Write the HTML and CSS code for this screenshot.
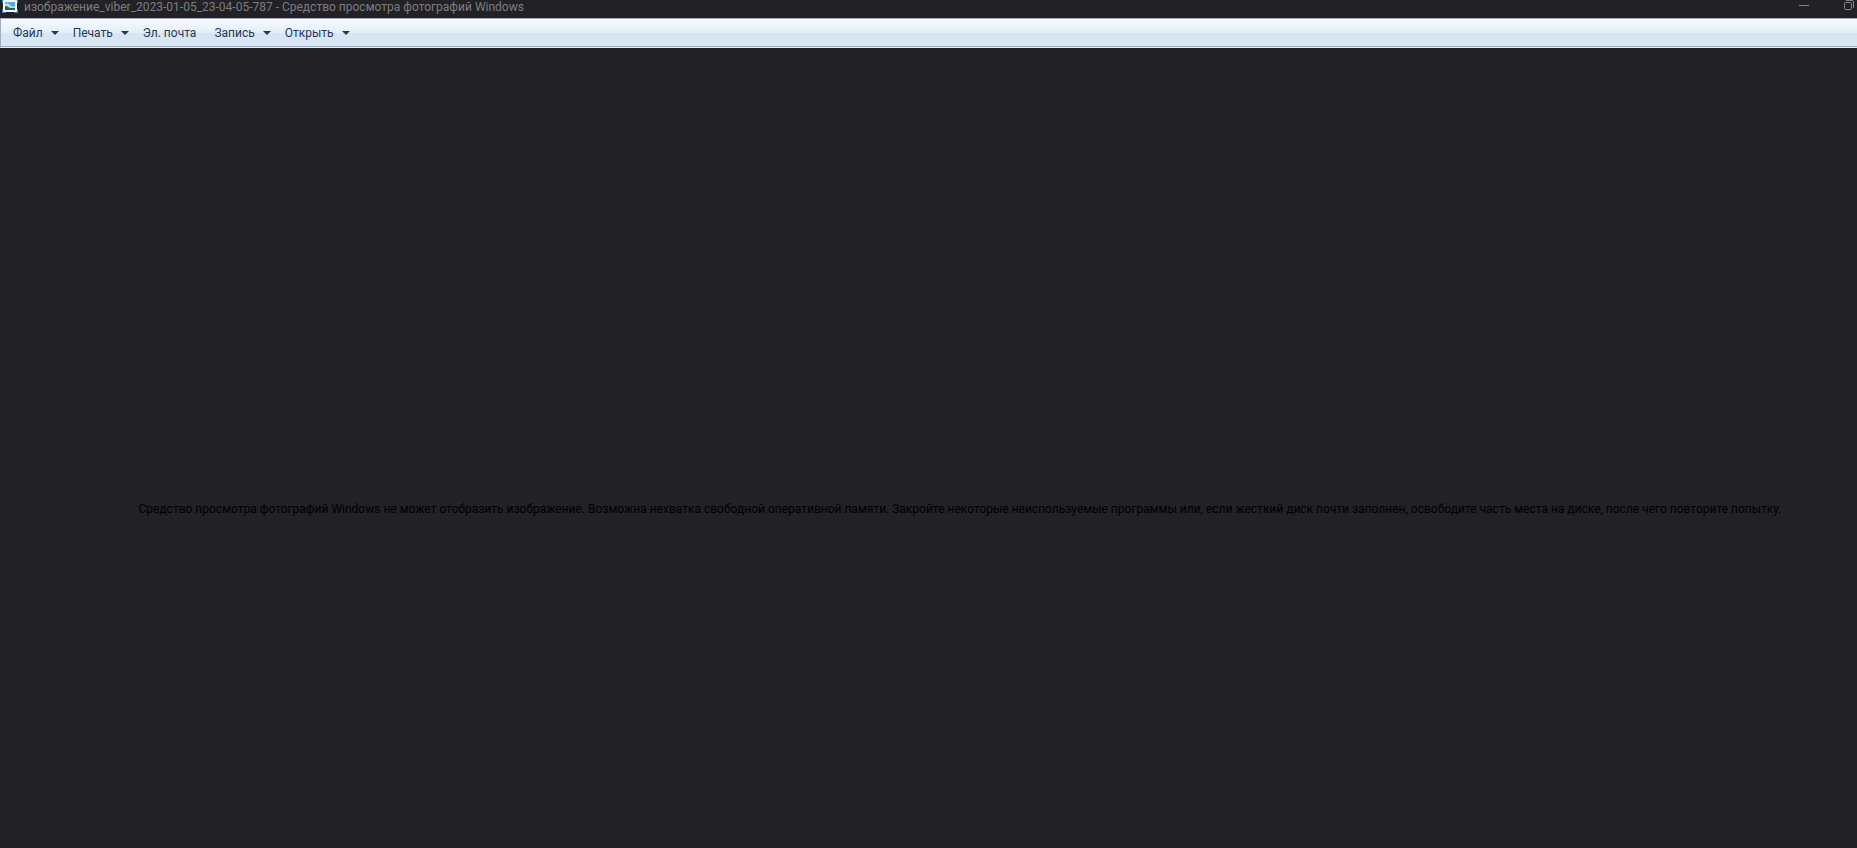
FILE: index.html
```html
<!DOCTYPE html>
<html lang="ru">
<head>
  <meta charset="UTF-8">
  <meta name="viewport" content="width=device-width, initial-scale=1.0">
  <title>Средство просмотра фотографий Windows</title>
  <link rel="stylesheet" href="styles.css">
</head>
<body>
  <header class="titlebar">
    <svg class="app-icon" width="18" height="14" viewBox="0 0 18 14" aria-hidden="true">
      <path d="M2 0h4v3H2zM14 0h4v3h-4zM2 9h4v4H2zM14 9h4v4h-4z" fill="#2f86c8"/>
      <rect x="3" y="0" width="14" height="12" rx="1" fill="#f4f8fa"/>
      <rect x="5" y="2" width="10" height="8" fill="#58a8dc"/>
      <path d="M5 4q3-2 5 1t5 1v2H5z" fill="#b8e0e8"/>
      <path d="M5 6q3 0 5 2h5v2H5z" fill="#28665c"/>
    </svg>
    <h1 class="title">изображение_viber_2023-01-05_23-04-05-787 - Средство просмотра фотографий Windows</h1>
    <div class="window-btns">
      <button class="window-btn" aria-label="Свернуть">
        <svg width="10" height="11" viewBox="0 0 10 11"><path d="M0 5.500h10" stroke="#858587"/></svg>
      </button>
      <button class="window-btn" aria-label="Восстановить">
        <svg width="10" height="11" viewBox="0 0 10 11" fill="none" stroke="#858587"><rect x=".5" y="2.500" width="7" height="7" rx="1"/><path d="M2 .5h6q1.500 0 1.500 1.500v6"/></svg>
      </button>
    </div>
  </header>
  <nav class="toolbar">
    <button class="menu-btn">Файл <span class="arrow"></span></button>
    <button class="menu-btn">Печать <span class="arrow"></span></button>
    <button class="menu-btn menu-btn-plain">Эл. почта</button>
    <button class="menu-btn">Запись <span class="arrow"></span></button>
    <button class="menu-btn">Открыть <span class="arrow"></span></button>
  </nav>
  <main class="viewer">
    <p class="message">Средство просмотра фотографий Windows не может отобразить изображение. Возможна нехватка свободной оперативной памяти. Закройте некоторые неиспользуемые программы или, если жесткий диск почти заполнен, освободите часть места на диске, после чего повторите попытку.</p>
  </main>
</body>
</html>
```
FILE: styles.css
```css
* {
  box-sizing: border-box;
}
body {
  display: flex;
  flex-direction: column;
  min-height: 100vh;
  margin: 0;
  background-color: #222126;
  font-family: Roboto, "Open Sans", sans-serif;
  font-size: 12px;
}
button {
  padding: 0;
  border: 0;
  background: none;
  font: inherit;
}
.titlebar {
  display: flex;
  height: 18px;
  color: #7d7d80;
}
.app-icon {
  flex: none;
}
.title {
  flex: 1;
  margin: 0 0 0 6px;
  font-size: 12px;
  font-weight: 400;
  line-height: 14px;
  white-space: nowrap;
}
.window-btns {
  display: flex;
  gap: 34px;
  padding-right: 2px;
}
.window-btn {
  display: flex;
  width: 11px;
  height: 11px;
}
.toolbar {
  display: flex;
  align-items: center;
  gap: 14px;
  height: 30px;
  padding-left: 12px;
  border-top: 1px solid #a0aec4;
  border-left: 1px solid #a0aec4;
  border-bottom: 1px solid #e4eef9;
  background: linear-gradient(#f8fbff, #e4eef9 48%, #d8e5f2 50%, #d8e5f2);
  box-shadow: inset 0 -1px #a0aec4;
}
.menu-btn {
  display: flex;
  align-items: center;
  gap: 8px;
  color: #1e395b;
  line-height: 20px;
}
.menu-btn-plain {
  padding-right: 4px;
}
.arrow {
  border: 4px solid transparent;
  border-top-color: #1e395b;
  border-bottom: 0;
}
.viewer {
  display: flex;
  flex: 1;
  align-items: center;
  justify-content: center;
  padding: 122px 0 0 63px;
}
.message {
  margin: 0;
  color: #000;
  line-height: 16px;
}
```
